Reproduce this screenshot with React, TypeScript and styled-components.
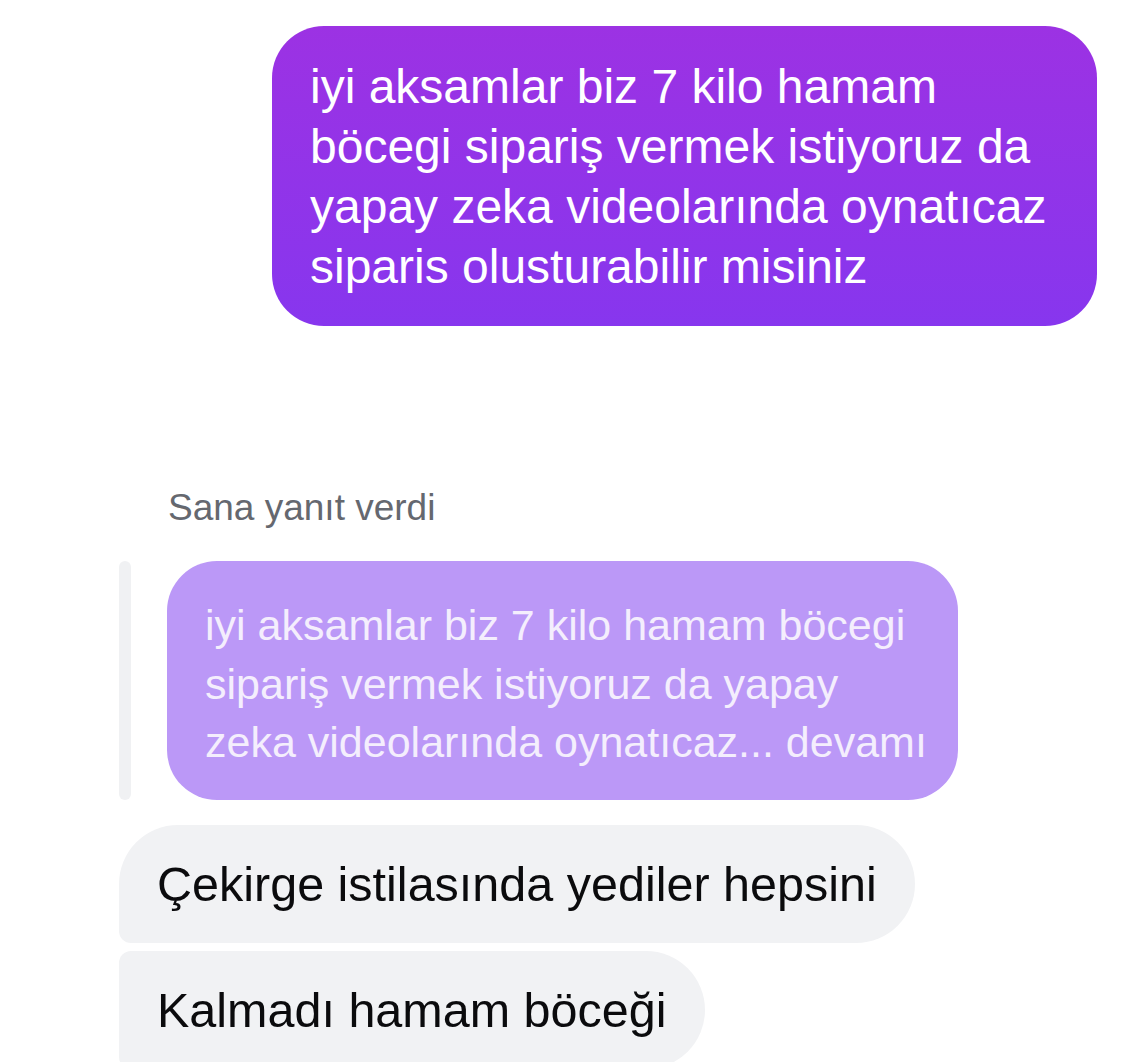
import React from "react";
import styled, { createGlobalStyle } from "styled-components";

const Global = createGlobalStyle`
  html, body { margin: 0; padding: 0; background: #ffffff; }
  body { font-family: "Liberation Sans", Arial, sans-serif; -webkit-font-smoothing: antialiased; }
`;

const Page = styled.div`
  width: 1121px;
  height: 1062px;
  overflow: hidden;
  box-sizing: border-box;
  padding: 26px 0 0 119px;
  display: flex;
  flex-direction: column;
  align-items: flex-start;
`;

const SentRow = styled.div`
  align-self: flex-end;
  margin-right: 24px;
`;

const SentBubble = styled.div`
  width: 825px;
  height: 300px;
  box-sizing: border-box;
  padding: 31px 38px 29px;
  border-radius: 52px;
  background: linear-gradient(180deg, #9c32e3 0%, #8736ee 100%);
  color: #ffffff;
  font-size: 48px;
  line-height: 60px;
  white-space: nowrap;
`;

const ReplyLabel = styled.div`
  margin: 162px 0 0 49px;
  font-size: 37px;
  line-height: 40px;
  color: #65686f;
`;

const QuoteRow = styled.div`
  margin-top: 33px;
  display: flex;
  align-items: stretch;
  gap: 36px;
`;

const QuoteBar = styled.div`
  width: 12px;
  border-radius: 6px;
  background: #f0f1f3;
`;

const QuoteBubble = styled.div`
  width: 791px;
  height: 239px;
  box-sizing: border-box;
  padding: 35px 38px 28px;
  border-radius: 50px;
  background: #bb98f7;
  color: #f4eefd;
  font-size: 43px;
  line-height: 58.5px;
  white-space: nowrap;
`;

const ReceivedGroup = styled.div`
  margin-top: 25px;
  display: flex;
  flex-direction: column;
  align-items: flex-start;
  gap: 8px;
`;

const ReceivedBubble = styled.div<{ $first?: boolean }>`
  height: 118px;
  box-sizing: border-box;
  padding: 0 38px 0 38px;
  display: flex;
  align-items: center;
  background: #f1f2f4;
  color: #0b0b0d;
  font-size: 48.5px;
  white-space: nowrap;
  border-radius: ${(p) => (p.$first ? "59px 59px 59px 12px" : "12px 59px 59px 12px")};
`;

export default function App() {
  return (
    <>
      <Global />
      <Page>
        <SentRow>
          <SentBubble>
            iyi aksamlar biz 7 kilo hamam
            <br />
            böcegi sipariş vermek istiyoruz da
            <br />
            yapay zeka videolarında oynatıcaz
            <br />
            siparis olusturabilir misiniz
          </SentBubble>
        </SentRow>
        <ReplyLabel>Sana yanıt verdi</ReplyLabel>
        <QuoteRow>
          <QuoteBar />
          <QuoteBubble>
            iyi aksamlar biz 7 kilo hamam böcegi
            <br />
            sipariş vermek istiyoruz da yapay
            <br />
            zeka videolarında oynatıcaz... devamı
          </QuoteBubble>
        </QuoteRow>
        <ReceivedGroup>
          <ReceivedBubble $first>Çekirge istilasında yediler hepsini</ReceivedBubble>
          <ReceivedBubble>Kalmadı hamam böceği</ReceivedBubble>
        </ReceivedGroup>
      </Page>
    </>
  );
}
